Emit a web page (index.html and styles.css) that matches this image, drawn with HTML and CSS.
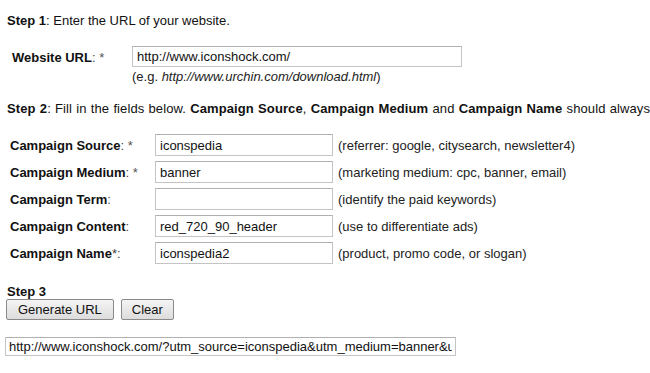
FILE: index.html
```html
<!DOCTYPE html>
<html lang="en">
<head>
    <meta charset="UTF-8">
    <title>URL Builder</title>
    <link rel="stylesheet" href="styles.css">
</head>
<body>
<div class="builder">
    <p class="step"><strong>Step 1</strong>: Enter the URL of your website.</p>
    <div class="site-row">
        <label class="label" for="site-url"><strong>Website URL</strong>: <span class="req">*</span></label>
        <div class="site-field">
            <input type="text" id="site-url" class="field wide" value="http://www.iconshock.com/">
            <span class="example">(e.g. <em>http://www.urchin.com/download.html</em>)</span>
        </div>
    </div>

    <p class="step step-two"><strong>Step 2</strong>: Fill in the fields below. <strong>Campaign Source</strong>, <strong>Campaign Medium</strong> and <strong>Campaign Name</strong> should always</p>
    <div class="fields">
        <label class="label" for="src"><strong>Campaign Source</strong>: <span class="req">*</span></label>
        <input type="text" id="src" class="field" value="iconspedia">
        <span class="hint">(referrer: google, citysearch, newsletter4)</span>

        <label class="label" for="med"><strong>Campaign Medium</strong>: <span class="req">*</span></label>
        <input type="text" id="med" class="field" value="banner">
        <span class="hint">(marketing medium: cpc, banner, email)</span>

        <label class="label" for="term"><strong>Campaign Term</strong>:</label>
        <input type="text" id="term" class="field" value="">
        <span class="hint">(identify the paid keywords)</span>

        <label class="label" for="content"><strong>Campaign Content</strong>:</label>
        <input type="text" id="content" class="field" value="red_720_90_header">
        <span class="hint">(use to differentiate ads)</span>

        <label class="label" for="name"><strong>Campaign Name</strong>*:</label>
        <input type="text" id="name" class="field" value="iconspedia2">
        <span class="hint">(product, promo code, or slogan)</span>
    </div>

    <p class="step step-three"><strong>Step 3</strong></p>
    <div class="buttons">
        <button type="button" class="btn">Generate URL</button>
        <button type="button" class="btn btn-clear">Clear</button>
    </div>
    <input type="text" class="field result" value="http://www.iconshock.com/?utm_source=iconspedia&amp;utm_medium=banner&amp;utm_content=red_720_90_header&amp;utm_campaign=iconspedia2">
</div>
</body>
</html>
```

FILE: styles.css
```css
* {
    box-sizing: border-box;
}
body {
    margin: 0;
    padding: 0;
    overflow: hidden;
    background: #fff;
    color: #111;
    font-family: "Liberation Sans", Arial, sans-serif;
    font-size: 13px;
}
.builder {
    padding: 13px 0 0 7px;
}
.step {
    margin: 0;
    white-space: nowrap;
    line-height: 15px;
}
.step strong,
.label strong {
    color: #111;
}
.label {
    color: #444;
}
.req {
    color: #555;
}
.site-row {
    display: flex;
    margin-top: 18px;
    padding-left: 5px;
}
.site-row .label {
    width: 120px;
    padding-top: 4px;
}
.site-field {
    display: flex;
    flex-direction: column;
}
.field {
    height: 22px;
    padding: 1px 4px;
    border: 1px solid #c4c4c4;
    border-top-color: #b0b0b0;
    font-family: inherit;
    font-size: 13px;
    color: #111;
    background: #fff;
}
.field.wide {
    width: 330px;
    height: 21px;
}
.example {
    margin-top: 3px;
    color: #222;
    line-height: 14px;
}
.step-two {
    margin-top: 17px;
    word-spacing: 0.5px;
    letter-spacing: 0.1px;
}
.fields {
    display: grid;
    grid-template-columns: 140px 178px auto;
    column-gap: 5px;
    row-gap: 5px;
    align-items: center;
    margin-top: 18px;
    padding-left: 3px;
}
.fields .field {
    width: 178px;
}
.hint {
    color: #222;
}
.step-three {
    margin-top: 20px;
}
.buttons {
    display: flex;
    gap: 7px;
    margin-left: -1px;
}
.btn {
    height: 21px;
    padding: 0 11px;
    border: 1px solid #8a8a8a;
    border-radius: 2px;
    background: linear-gradient(#f4f4f4, #dcdcdc);
    font-family: inherit;
    font-size: 13px;
    color: #111;
}
.btn-clear {
    width: 53px;
    padding: 0;
}
.result {
    display: block;
    width: 451px;
    height: 19px;
    margin-top: 17px;
    margin-left: -2px;
    padding: 0 3px;
}
```
